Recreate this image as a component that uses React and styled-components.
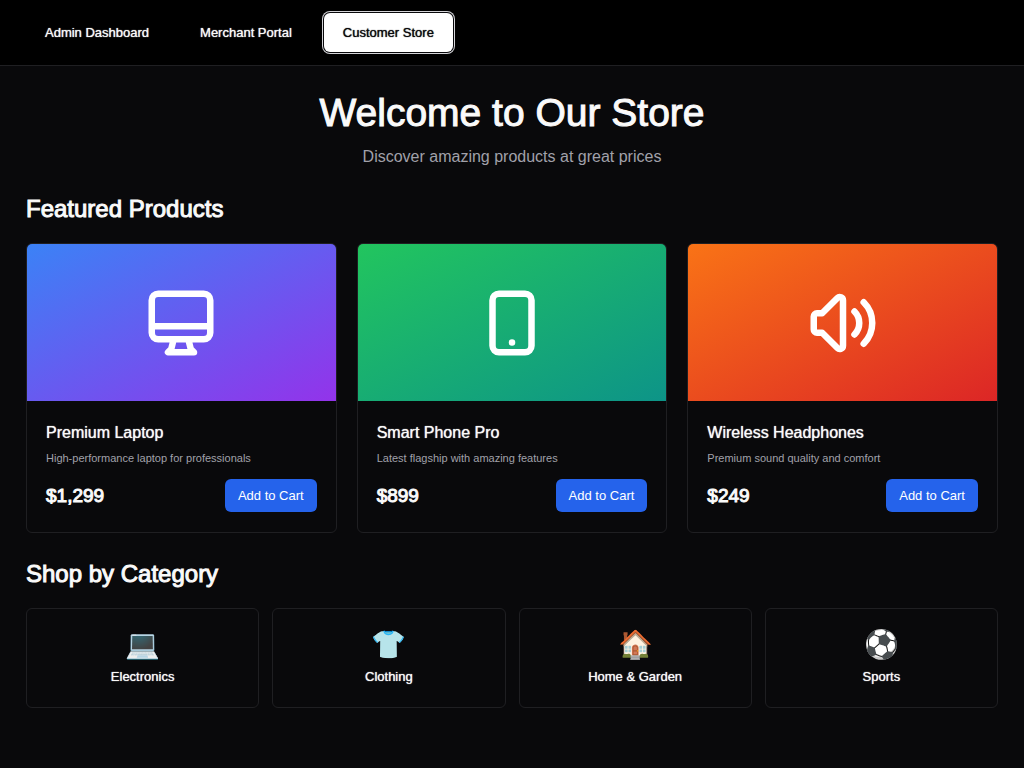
import React from "react";
import styled, { createGlobalStyle, css } from "styled-components";

const GlobalStyle = createGlobalStyle`
  *, *::before, *::after { box-sizing: border-box; }
  body {
    margin: 0;
    min-height: 100vh;
    background: #09090b;
    color: #fafafa;
    font-family: "Liberation Sans", Arial, sans-serif;
    font-size: 13px;
    line-height: 20px;
  }
  h1, h2, h3, p { margin: 0; }
  button { font: inherit; cursor: pointer; }
`;

/* Medium weights, thickened from the regular face */
const mediumText = css`
  font-weight: 400;
  text-shadow: 0 0 1px currentColor;
`;

const strongText = css`
  font-weight: 400;
  -webkit-text-stroke: 1px currentColor;
`;

const Header = styled.header`
  background: #000;
  border-bottom: 1px solid #1f1f22;
  padding: 13px 26px;
`;

const Nav = styled.nav`
  display: flex;
  gap: 13px;
`;

const NavButton = styled.button`
  height: 39px;
  padding: 0 19px;
  border: 0;
  border-radius: 6px;
  ${mediumText}
  color: ${(p) => (p.$active ? "#09090b" : "#fafafa")};
  background: ${(p) => (p.$active ? "#fff" : "transparent")};
  box-shadow: ${(p) => (p.$active ? "0 0 0 1px #09090b, 0 0 0 2px #d4d4d8" : "none")};
`;

const Main = styled.main`
  padding: 26px;
`;

const Hero = styled.section`
  text-align: center;
  margin-bottom: 26px;
`;

const Title = styled.h1`
  font-size: 39px;
  line-height: 42px;
  ${strongText}
  margin-bottom: 11px;
`;

const Subtitle = styled.p`
  font-size: 16px;
  line-height: 23px;
  color: #a1a1aa;
`;

const SectionTitle = styled.h2`
  font-size: 24px;
  line-height: 30px;
  ${strongText}
  margin-bottom: 19px;
`;

const ProductGrid = styled.div`
  display: grid;
  grid-template-columns: repeat(3, 1fr);
  gap: 20px;
  margin-bottom: 26px;
`;

const ProductCard = styled.article`
  border: 1px solid #1f1f22;
  border-radius: 6px;
  overflow: hidden;
`;

const ProductImage = styled.div`
  height: 157px;
  display: flex;
  align-items: center;
  justify-content: center;
  background: linear-gradient(to bottom right, ${(p) => p.$from}, ${(p) => p.$to});
`;

const Icon = styled.svg`
  width: 78px;
  height: 78px;
  fill: none;
  stroke: #fff;
  stroke-width: 2;
  stroke-linecap: round;
  stroke-linejoin: round;
`;

const ProductBody = styled.div`
  padding: 20px 19px;
`;

const ProductName = styled.h3`
  font-size: 16px;
  line-height: 23px;
  ${mediumText}
  margin-bottom: 6px;
`;

const Description = styled.p`
  font-size: 11px;
  line-height: 16px;
  color: #a1a1aa;
  margin-bottom: 13px;
`;

const PriceRow = styled.div`
  display: flex;
  align-items: center;
  justify-content: space-between;
`;

const Price = styled.span`
  font-size: 19px;
  line-height: 26px;
  ${strongText}
`;

const CartButton = styled.button`
  height: 33px;
  padding: 0 13px;
  border: 0;
  border-radius: 6px;
  background: #2563eb;
  color: #fff;
`;

const CategoryGrid = styled.div`
  display: grid;
  grid-template-columns: repeat(4, 1fr);
  gap: 13px;
`;

const CategoryCard = styled.article`
  padding: 19px 19px 20px;
  border: 1px solid #1f1f22;
  border-radius: 6px;
  text-align: center;
`;

const Emoji = styled.div`
  font-size: 28px;
  line-height: 34px;
  margin-bottom: 5px;
`;

const CategoryName = styled.h3`
  font-size: 13px;
  line-height: 20px;
  ${mediumText}
`;

const tabs = ["Admin Dashboard", "Merchant Portal", "Customer Store"];

const products = [
  {
    name: "Premium Laptop",
    text: "High-performance laptop for professionals",
    price: "$1,299",
    from: "#3b82f6",
    to: "#9333ea",
    path: "M9.75 17L9 20l-1 1h8l-1-1-.75-3M3 13h18M5 17h14a2 2 0 002-2V5a2 2 0 00-2-2H5a2 2 0 00-2 2v10a2 2 0 002 2z",
  },
  {
    name: "Smart Phone Pro",
    text: "Latest flagship with amazing features",
    price: "$899",
    from: "#22c55e",
    to: "#0d9488",
    path: "M12 18h.01M8 21h8a2 2 0 002-2V5a2 2 0 00-2-2H8a2 2 0 00-2 2v14a2 2 0 002 2z",
  },
  {
    name: "Wireless Headphones",
    text: "Premium sound quality and comfort",
    price: "$249",
    from: "#f97316",
    to: "#dc2626",
    path: "M15.536 8.464a5 5 0 010 7.072m2.828-9.9a9 9 0 010 12.728M5.586 15H4a1 1 0 01-1-1v-4a1 1 0 011-1h1.586l4.707-4.707C10.923 3.663 12 4.109 12 5v14c0 .891-1.077 1.337-1.707.707L5.586 15z",
  },
];

const categories = [
  { emoji: "💻", name: "Electronics" },
  { emoji: "👕", name: "Clothing" },
  { emoji: "🏠", name: "Home & Garden" },
  { emoji: "⚽", name: "Sports" },
];

export default function App() {
  const [active, setActive] = React.useState("Customer Store");
  return (
    <>
      <GlobalStyle />
      <Header>
        <Nav>
          {tabs.map((tab) => (
            <NavButton key={tab} type="button" $active={tab === active} onClick={() => setActive(tab)}>
              {tab}
            </NavButton>
          ))}
        </Nav>
      </Header>
      <Main>
        <Hero>
          <Title>Welcome to Our Store</Title>
          <Subtitle>Discover amazing products at great prices</Subtitle>
        </Hero>
        <section>
          <SectionTitle>Featured Products</SectionTitle>
          <ProductGrid>
            {products.map((p) => (
              <ProductCard key={p.name}>
                <ProductImage $from={p.from} $to={p.to}>
                  <Icon viewBox="0 0 24 24" aria-hidden="true">
                    <path d={p.path} />
                  </Icon>
                </ProductImage>
                <ProductBody>
                  <ProductName>{p.name}</ProductName>
                  <Description>{p.text}</Description>
                  <PriceRow>
                    <Price>{p.price}</Price>
                    <CartButton type="button">Add to Cart</CartButton>
                  </PriceRow>
                </ProductBody>
              </ProductCard>
            ))}
          </ProductGrid>
        </section>
        <section>
          <SectionTitle>Shop by Category</SectionTitle>
          <CategoryGrid>
            {categories.map((c) => (
              <CategoryCard key={c.name}>
                <Emoji>{c.emoji}</Emoji>
                <CategoryName>{c.name}</CategoryName>
              </CategoryCard>
            ))}
          </CategoryGrid>
        </section>
      </Main>
    </>
  );
}
